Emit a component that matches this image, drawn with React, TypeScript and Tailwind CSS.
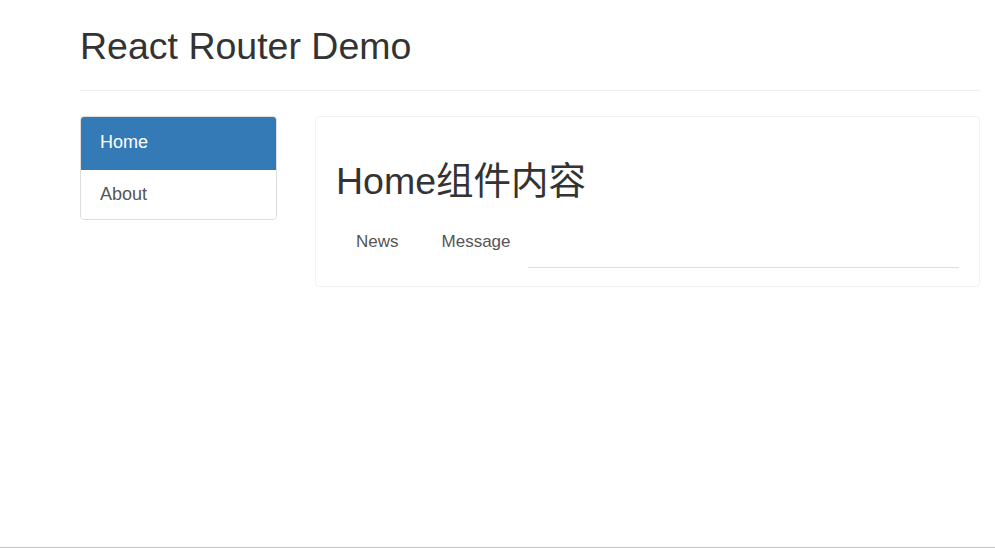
const navItems = ['Home', 'About'];
const tabs = ['News', 'Message'];

export default function App() {
  return (
    <main className="h-[548px] border-b border-[#c4c4c4] bg-white font-['Liberation_Sans','Noto_Sans_CJK_SC',sans-serif] text-[#333]">
      <div className="pl-[80px] pr-[15px]">
        <div className="border-b border-[#eee] pb-[19px] pt-[21px]">
          <h2 className="text-[37.5px] leading-[50px]">React Router Demo</h2>
        </div>

        <div className="mt-[25px] flex gap-[38px]">
          <div className="flex w-[197px] flex-col self-start overflow-hidden rounded-[4px] border border-[#ddd]">
            {navItems.map((item, i) => (
              <a
                key={item}
                className={
                  i === 0
                    ? 'h-[53px] bg-[#337ab7] pl-[19px] pt-[15px] text-[18px] leading-[20px] text-white'
                    : 'h-[49px] bg-white pl-[19px] pt-[14px] text-[18px] leading-[20px] text-[#555]'
                }
              >
                {item}
              </a>
            ))}
          </div>

          <div className="h-[171px] flex-1 rounded-[4px] border border-[#f3f3f3] px-[20px] pt-[44px]">
            <h2 className="text-[37.5px] leading-[40px] text-[#333]">Home组件内容</h2>
            <div className="mt-[22px] flex text-[17px] leading-[20px]">
              {tabs.map((tab) => (
                <a
                  key={tab}
                  className="mr-[3px] rounded-t-[4px] px-[20px] pb-[16px] pt-[9px] text-[#555]"
                >
                  {tab}
                </a>
              ))}
              <div className="-ml-[6px] flex-1 border-b border-[#ddd]" />
            </div>
          </div>
        </div>
      </div>
    </main>
  );
}
